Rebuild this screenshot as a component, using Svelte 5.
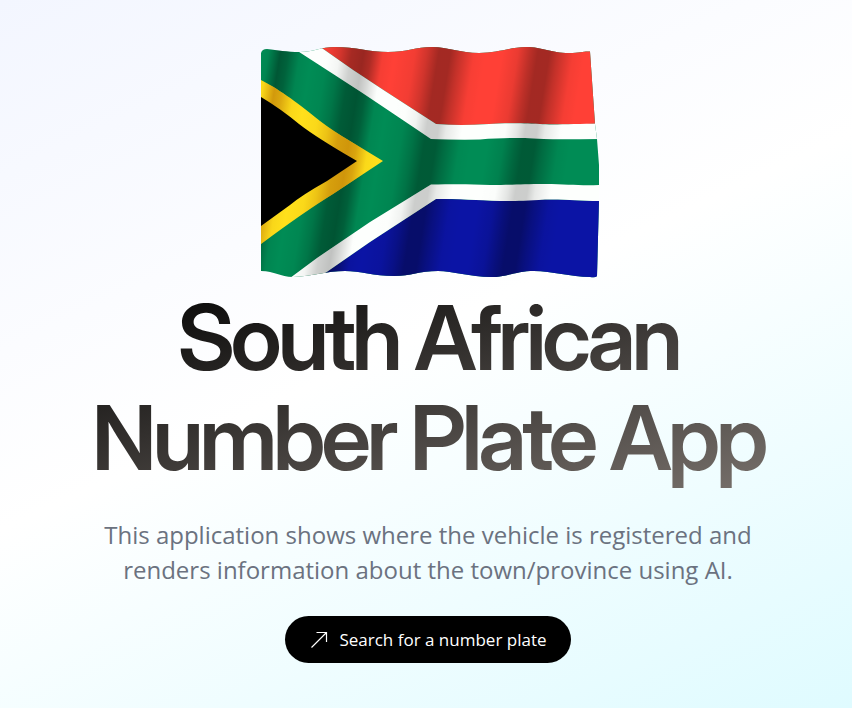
<script>
  const folds = [
    [0, 0], [2, 0.05], [5, 0.38], [7, 0.3], [10, 0.05], [13, 0],
    [17, 0.04], [20, 0.16], [23, 0.35], [26, 0.4], [28, 0.32], [31, 0.04], [34, 0],
    [39, 0.05], [42, 0.18], [45, 0.36], [48, 0.36], [50, 0.24], [54, 0.03], [57, 0],
    [61, 0], [65, 0.08], [68, 0.26], [70, 0.36], [73, 0.36], [75, 0.24], [79, 0.04], [82, 0],
    [92, 0], [96, 0.04], [100, 0.06]
  ];
</script>

<svelte:head>
  <title>South African Number Plate App</title>
</svelte:head>

<main>
  <svg class="flag" viewBox="261 46 339 232" role="img" aria-label="Flag of South Africa">
    <defs>
      <linearGradient id="shade" gradientUnits="userSpaceOnUse" x1="261" y1="50" x2="647" y2="112">
        {#each folds as [offset, depth]}
          <stop offset="{offset}%" stop-color="#000" stop-opacity={depth} />
        {/each}
      </linearGradient>
      <linearGradient id="soft" gradientUnits="userSpaceOnUse" x1="261" y1="50" x2="647" y2="112">
        {#each folds as [offset, depth]}
          <stop offset="{offset}%" stop-color="#000" stop-opacity={depth * depth * 1.5} />
        {/each}
      </linearGradient>
      <linearGradient id="gold" gradientUnits="userSpaceOnUse" x1="261" y1="50" x2="647" y2="112">
        {#each folds as [offset, depth]}
          <stop offset="{offset}%" stop-color="#b06400" stop-opacity={depth * 1.5} />
        {/each}
      </linearGradient>
      <clipPath id="cloth">
        <path d="M261 53Q262 49 267 49C278 50 286 52 300 52C313 52 321 47 335 47C356 47 369 52 388 52C407 52 416 47 432 47C448 47 460 53 479 53C499 53 510 47 526 47C543 47 550 53 569 53C581 53 583 51 590 51.500L595 124L597 139L599 165L599 200L597 276Q596 278 590 277C571 277 552 271 534 271C516 271 507 277 491 277C470 277 453 271 438 271C419 271 411 276 394 276C374 276 360 271 345 271C326 271 313 276 293 277C280 277 275 271 261 271Z" />
      </clipPath>
      <path id="upper-band" d="M296 50L361 92L431 139Q458 140 480 139.500C497 138 510 138 525 138C550 140 574 139 599 139V123.500C574 124 550 125 540 124C516 123 505 123 489 124Q460 126 436 124L385 91Q352 70 319 46H290Z" />
      <path id="lower-band" d="M431 184.500C455 184 471 184 490 185C514 185 522 184 545 184C568 184 579 186 600 185V201C580 201 566 199 545 199.500C522 201 511 201 500 201C477 200 460 199 436 199L370 242L318 278H290L317 258L370 222Z" />
      <path id="chevron" d="M261 80C278 89 293 99 320 121Q333 131 350 141L383 161L333 194Q304 212 261 244Z" />
    </defs>
    <g clip-path="url(#cloth)">
      <rect x="261" y="46" width="339" height="232" fill="#008c55" />
      <path d="M319 46Q352 70 385 91L436 124Q460 126 489 124C505 123 516 123 540 124Q570 125 600 123.500V46Z" fill="#ff4036" />
      <path d="M318 278L370 242L436 199C460 199 477 200 500 201C522 201 530 199 545 199.500C566 199 580 201 600 201V278Z" fill="#0b14a5" />
      <rect x="261" y="46" width="339" height="232" fill="url(#shade)" />
      <use href="#chevron" fill="#ffe01b" />
      <use href="#chevron" fill="url(#gold)" />
      <path d="M261 97Q281 109 299 124Q317 138 357 161L327 181Q302 195 290 205L261 226Z" fill="#000" />
      <use href="#upper-band" fill="#fdfffd" />
      <use href="#lower-band" fill="#fdfffd" />
      <use href="#upper-band" fill="url(#soft)" />
      <use href="#lower-band" fill="url(#soft)" />
    </g>
  </svg>

  <h1>South African Number Plate App</h1>
  <p>This application shows where the vehicle is registered and renders information about the town/province using AI.</p>
  <a class="search" href="#search">
    <svg viewBox="0 0 20 20" aria-hidden="true">
      <path d="M2.500 17.500L17 3M7.500 2.500H17.500V12" />
    </svg>
    <span>Search for a number plate</span>
  </a>
</main>

<style>
  main {
    box-sizing: border-box;
    min-height: 100vh;
    padding: 46px 20px 45px 24px;
    display: flex;
    flex-direction: column;
    align-items: center;
    text-align: center;
    font-family: "Open Sans", "Noto Sans", sans-serif;
    background: linear-gradient(155deg, #f3f6ff 0%, #fff 48%, #dffbff 100%);
  }

  .flag {
    display: block;
    width: 339px;
    max-width: 100%;
    margin-left: 4px;
  }

  h1 {
    max-width: 720px;
    margin: 10px 0 0;
    font: 600 90px/100px "Inter Display", Inter, sans-serif;
    font-variation-settings: "opsz" 32;
    letter-spacing: -0.05em;
    color: transparent;
    background: linear-gradient(to bottom right, #000, #78716c);
    background-clip: text;
  }

  p {
    max-width: 680px;
    margin: 29px 0 0;
    font-size: 24px;
    line-height: 35px;
    color: #6b7280;
  }

  .search {
    display: flex;
    align-items: center;
    gap: 10px;
    box-sizing: border-box;
    height: 47px;
    margin-top: 29px;
    padding: 0 24px;
    border-radius: 24px;
    background: #000;
    color: #fff;
    font-size: 17px;
    text-decoration: none;
  }

  .search svg {
    width: 20px;
    height: 20px;
    fill: none;
    stroke: #fff;
    stroke-width: 1.200;
  }
</style>
